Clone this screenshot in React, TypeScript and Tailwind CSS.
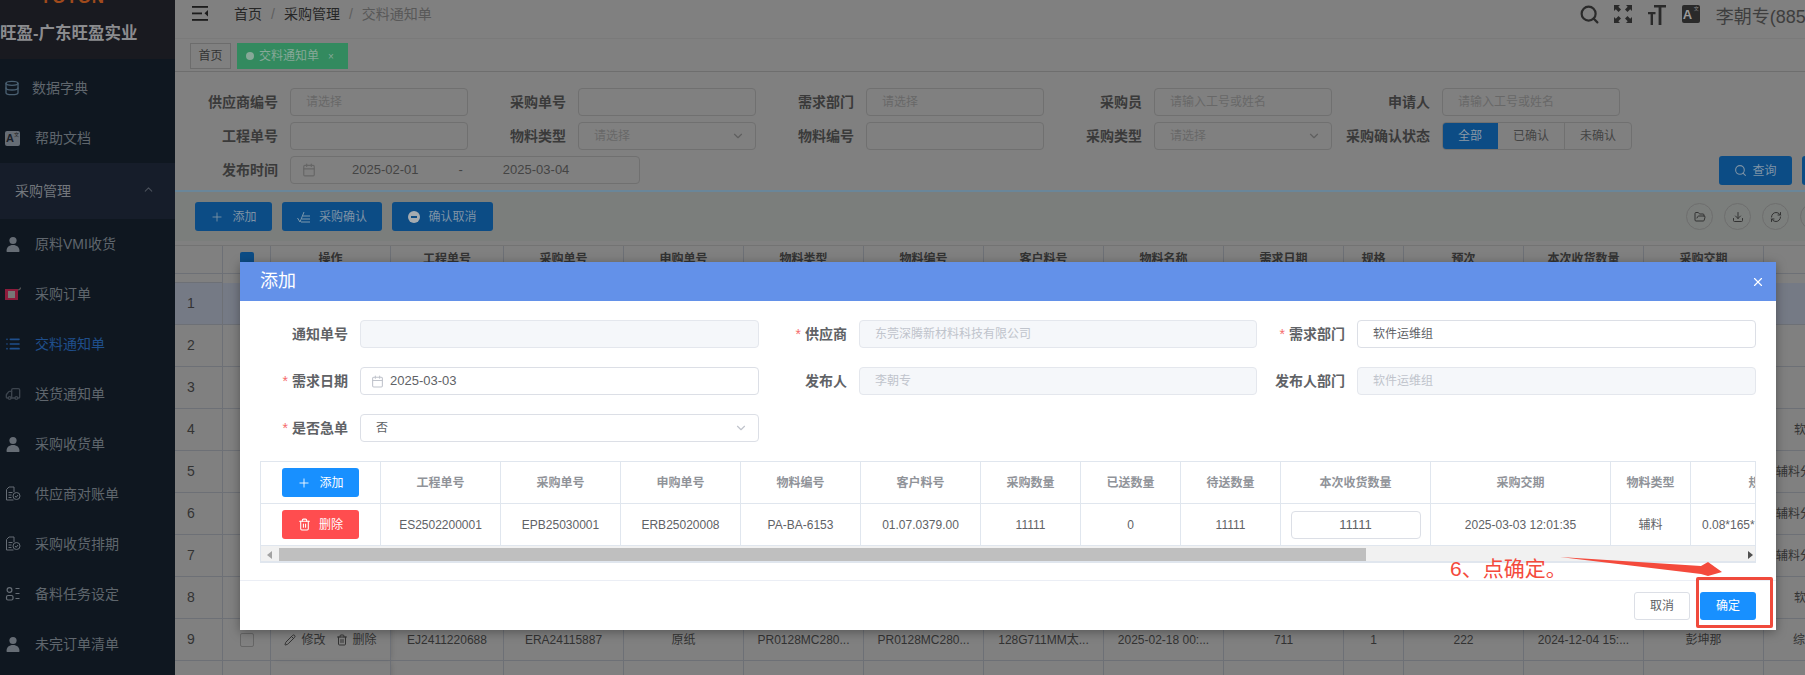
import React from 'react';
import {
  Calendar,
  ChevronDown,
  ChevronUp,
  Database,
  Download,
  FolderOpen,
  List,
  Pencil,
  Plus,
  RefreshCw,
  Search,
  Trash2,
  Truck,
  X,
} from 'lucide-react';

const FONT = "font-['Liberation_Sans','Noto_Sans_CJK_SC',sans-serif]";

// ---- small drawn icons ----
function PersonIcon() {
  return (
    <svg width="16" height="16" viewBox="0 0 16 16" className="shrink-0 text-[#666d75]" fill="currentColor">
      <circle cx="8" cy="4.5" r="3.6" />
      <path d="M1.5 15c0-3.8 2.6-6 6.5-6s6.500 2.200 6.500 6c0 .6-.4 1-1 1h-11c-.6 0-1-.4-1-1z" />
    </svg>
  );
}

function DocIcon() {
  return (
    <svg width="16" height="16" viewBox="0 0 16 16" fill="none" stroke="#666d75" strokeWidth="1" className="shrink-0">
      <path d="M8.500 14H1.500V3.500L4 1h5v5" />
      <path d="M3.500 6.500h4M3.500 9h3M3.500 11.500h3" />
      <circle cx="11.500" cy="10" r="3.500" />
      <path d="M10 10l1.200 1.300L13 9" />
    </svg>
  );
}

function TaskIcon() {
  return (
    <svg width="16" height="16" viewBox="0 0 16 16" fill="none" stroke="#666d75" strokeWidth="1.200" className="shrink-0">
      <circle cx="4.500" cy="4" r="2.400" />
      <rect x="1.500" y="9.500" width="6.500" height="4.500" rx="1.500" />
      <path d="M10.500 2.500h4M10.500 7.500h4M10.500 12.500h4" />
    </svg>
  );
}

function TagIcon() {
  return (
    <svg width="16" height="14" viewBox="0 0 16 14" className="shrink-0">
      <rect x="0" y="2" width="13" height="11" fill="#8c1c3c" />
      <rect x="3" y="4" width="7" height="7" fill="#777" />
      <path d="M13 3c1.500-.2 2.500-1 2.500-2.500" fill="none" stroke="#555" strokeWidth="1.200" />
    </svg>
  );
}

function TranslateIcon({ box, text }: { box: string; text: string }) {
  return (
    <div className={`relative flex shrink-0 items-center rounded-[2px] ${box}`}>
      <span className={`pl-[1px] font-bold leading-none ${text}`}>A</span>
      <span className="absolute right-[1px] top-[1px] text-[5px] leading-none">文</span>
    </div>
  );
}

function Hamburger() {
  return (
    <svg width="16" height="15" viewBox="0 0 16 15" fill="#1c1c1c" className="shrink-0">
      <rect x="0" y="0" width="16" height="1.800" />
      <rect x="0" y="6.500" width="10" height="1.800" />
      <rect x="0" y="13" width="16" height="1.800" />
      <path d="M16 4v6.500L12.500 7.300z" />
    </svg>
  );
}

function FullscreenIcon() {
  return (
    <svg width="18" height="18" viewBox="0 0 18 18" fill="#2a2a2a" className="shrink-0">
      <path d="M0 0h6L4.300 1.800 7 4.500 4.500 7 1.800 4.300 0 6z" />
      <path d="M18 0v6l-1.800-1.700L13.500 7 11 4.500l2.700-2.700L12 0z" />
      <path d="M0 18v-6l1.800 1.700L4.500 11 7 13.500l-2.700 2.700L6 18z" />
      <path d="M18 18h-6l1.700-1.800L11 13.500l2.500-2.500 2.700 2.700L18 12z" />
    </svg>
  );
}

function TextSizeIcon() {
  return (
    <svg width="18" height="20" viewBox="0 0 18 20" fill="#2a2a2a" className="shrink-0">
      <path d="M6 0h12v2.600h-4.600V20h-2.800V2.600H6z" />
      <path d="M0 7h7.500v2.200H5V20H2.600V9.200H0z" />
    </svg>
  );
}

function CheckLinesIcon() {
  return (
    <svg width="14" height="12" viewBox="0 0 14 12" fill="none" stroke="#7c98ad" strokeWidth="1">
      <path d="M0.500 7l2.500 4L7 1" />
      <path d="M6 5h7M5 8h8M4 11h9" />
    </svg>
  );
}

function MinusDot() {
  return (
    <svg width="12" height="12" viewBox="0 0 12 12">
      <circle cx="6" cy="6" r="6" fill="#a5abb0" />
      <rect x="3" y="5" width="6" height="2" fill="#0c4c85" />
    </svg>
  );
}

// ---- sidebar ----
function NavItem({ icon, label, active }: { icon: React.ReactNode; label: string; active?: boolean }) {
  return (
    <div className="flex h-[50px] items-center pl-[5px]">
      <div className="flex w-[30px] shrink-0 items-center">{icon}</div>
      <span className={active ? 'text-[14px] text-[#1f4f8c]' : 'text-[14px] text-[#5f666d]'}>{label}</span>
    </div>
  );
}

function Sidebar() {
  return (
    <aside className="w-[175px] shrink-0 overflow-hidden bg-[#0f1720]">
      <div className="h-[59px] overflow-hidden bg-[#191a20]">
        <div className="-mt-[11px] pl-[40px] text-[17px] font-bold leading-[18px] tracking-[1px] text-[#a04a1c]">YOTON</div>
        <div className="mt-[14px] whitespace-nowrap text-[16.500px] font-bold leading-[24px] text-[#8b8c8f]">旺盈-广东旺盈实业</div>
      </div>
      <div className="mt-[4px]">
        <div className="flex h-[50px] items-center pl-[4px]">
          <Database size={16} className="mr-[12px] shrink-0 text-[#4a6072]" />
          <span className="text-[14px] text-[#5f666d]">数据字典</span>
        </div>
        <NavItem
          icon={<TranslateIcon box="h-[15px] w-[15px] bg-[#666d75] text-[#222]" text="text-[11px] text-[#1a2028]" />}
          label="帮助文档"
        />
      </div>
      <div className="flex h-[56px] items-center justify-between bg-[#161d2a] pl-[15px] pr-[20px]">
        <span className="text-[14px] text-[#73777d]">采购管理</span>
        <ChevronUp size={13} className="-mt-[4px] text-[#4a505a]" />
      </div>
      <NavItem icon={<PersonIcon />} label="原料VMI收货" />
      <NavItem icon={<TagIcon />} label="采购订单" />
      <NavItem icon={<List size={16} className="text-[#1f4f8c]" strokeWidth={2.500} />} label="交料通知单" active />
      <NavItem icon={<Truck size={16} className="-scale-x-100 text-[#3c444d]" />} label="送货通知单" />
      <NavItem icon={<PersonIcon />} label="采购收货单" />
      <NavItem icon={<DocIcon />} label="供应商对账单" />
      <NavItem icon={<DocIcon />} label="采购收货排期" />
      <NavItem icon={<TaskIcon />} label="备料任务设定" />
      <NavItem icon={<PersonIcon />} label="未完订单清单" />
    </aside>
  );
}

// ---- filter form ----
function FilterField({
  label,
  placeholder,
  select,
  labelClass = 'w-[98px]',
}: {
  label: string;
  placeholder?: string;
  select?: boolean;
  labelClass?: string;
}) {
  return (
    <div className="flex items-center">
      <span className={`shrink-0 whitespace-nowrap text-right text-[14px] font-bold text-[#3a3a3a] ${labelClass}`}>{label}</span>
      <div className="ml-[12px] flex h-[28px] w-[178px] items-center justify-between rounded-[4px] border border-[#707070] px-[15px] text-[12px] text-[#686868]">
        <span>{placeholder}</span>
        {select && <ChevronDown size={14} className="-mr-[5px] text-[#5f5f5f]" />}
      </div>
    </div>
  );
}

function Filters() {
  return (
    <section className="flex h-[120px] shrink-0 flex-col gap-[6px] border-b-2 border-[#6a8699] pl-[4px] pt-[16px]">
      <div className="flex">
        <FilterField label="供应商编号" placeholder="请选择" labelClass="w-[99px]" />
        <FilterField label="采购单号" />
        <FilterField label="需求部门" placeholder="请选择" />
        <FilterField label="采购员" placeholder="请输入工号或姓名" />
        <FilterField label="申请人" placeholder="请输入工号或姓名" />
      </div>
      <div className="flex">
        <FilterField label="工程单号" labelClass="w-[99px]" />
        <FilterField label="物料类型" placeholder="请选择" select />
        <FilterField label="物料编号" />
        <FilterField label="采购类型" placeholder="请选择" select />
        <div className="flex items-center">
          <span className="w-[98px] shrink-0 whitespace-nowrap text-right text-[14px] font-bold text-[#3a3a3a]">采购确认状态</span>
          <div className="ml-[12px] flex h-[28px] overflow-hidden rounded-[4px] border border-[#707070] text-[12px] text-[#444]">
            <div className="-my-px -ml-px flex w-[56px] items-center justify-center bg-[#0c4c85] text-[#8d9aa5]">全部</div>
            <div className="flex w-[67px] items-center justify-center border-r border-[#707070]">已确认</div>
            <div className="flex w-[66px] items-center justify-center">未确认</div>
          </div>
        </div>
      </div>
      <div className="flex">
        <span className="w-[99px] shrink-0 text-right text-[14px] font-bold leading-[28px] text-[#3a3a3a]">发布时间</span>
        <div className="ml-[12px] flex h-[28px] w-[350px] shrink-0 items-center rounded-[4px] border border-[#707070] text-[13px] text-[#444]">
          <Calendar size={14} className="ml-[11px] text-[#666]" />
          <span className="ml-[36px]">2025-02-01</span>
          <span className="ml-[40px]">-</span>
          <span className="ml-[40px]">2025-03-04</span>
        </div>
        <div className="ml-[1079px] flex shrink-0 gap-[10px]">
          <div className="flex h-[29px] w-[73px] items-center justify-center gap-[5px] rounded-[3px] bg-[#0c4c85] text-[12px] text-[#7f93a5]">
            <Search size={13} />
            查询
          </div>
          <div className="flex h-[29px] w-[73px] items-center justify-center rounded-[3px] bg-[#0c4c85]" />
        </div>
      </div>
    </section>
  );
}

// ---- background table ----
const GRID =
  'grid grid-cols-[48px_48px_120px_113px_120px_120px_120px_120px_120px_120px_120px_60px_120px_120px_120px_120px]';

const HEADERS = ['操作', '工程单号', '采购单号', '申购单号', '物料类型', '物料编号', '客户料号', '物料名称', '需求日期', '规格', '预次', '本次收货数量', '采购交期', '发布人', ''];

const ROW9 = ['EJ2411220688', 'ERA24115887', '原纸', 'PR0128MC280...', 'PR0128MC280...', '128G711MM太...', '2025-02-18 00:...', '711', '1', '222', '2024-12-04 15:...', '彭坤那'];

const LAST_COL: { [row: number]: { text: string; cls: string } } = {
  4: { text: '软', cls: 'pl-[30px]' },
  5: { text: '辅料分', cls: 'pl-[12px]' },
  6: { text: '辅料分', cls: 'pl-[12px]' },
  7: { text: '辅料分', cls: 'pl-[12px]' },
  8: { text: '软', cls: 'pl-[30px]' },
  9: { text: '综', cls: 'pl-[29px]' },
};

const cell = 'flex items-center justify-center border-r border-b border-[#6d7076] text-[12px] text-[#333] whitespace-nowrap overflow-hidden';

function Checkbox({ on }: { on?: boolean }) {
  return (
    <div className={on ? 'h-[14px] w-[14px] rounded-[2px] bg-[#0c4c85]' : 'h-[14px] w-[14px] rounded-[2px] border border-[#666] bg-[#808080]'} />
  );
}

function BackTable() {
  const rows = [1, 2, 3, 4, 5, 6, 7, 8, 9, 10];
  return (
    <div className="mt-[4px] border-t border-[#737373]">
      <div className={`${GRID} h-[37px] w-[1705px]`}>
        <div className={cell} />
        <div className={cell}>
          <Checkbox on />
        </div>
        {HEADERS.map((h, i) => (
          <div key={i} className={`${cell} font-bold`}>
            {h}
          </div>
        ))}
      </div>
      {rows.map((n) => (
        <div key={n} className={`${GRID} h-[42px] w-[1705px] ${n === 1 ? 'bg-[#757a85]' : ''}`}>
          <div className={`${cell} justify-start pl-[12px] text-[14px]`}>{n}</div>
          <div className={cell}>
            <Checkbox />
          </div>
          <div className={`${cell} gap-[6px] text-[#1c3f74] shadow-[3px_0_5px_-2px_rgba(0,0,0,0.12)]`}>
            {n === 9 && (
              <>
                <span className="flex items-center gap-[5px]">
                  <Pencil size={12} />
                  修改
                </span>
                <span className="ml-[4px] flex items-center gap-[5px]">
                  <Trash2 size={12} />
                  删除
                </span>
              </>
            )}
          </div>
          {Array.from({ length: 12 }).map((_, i) => (
            <div key={i} className={cell}>
              {n === 9 ? ROW9[i] : ''}
            </div>
          ))}
          <div className={`${cell} justify-start ${LAST_COL[n]?.cls ?? ''}`}>{LAST_COL[n]?.text}</div>
        </div>
      ))}
    </div>
  );
}

// ---- dialog ----
function DialogField({
  label,
  required,
  labelClass,
  inputClass,
  value,
  disabled,
  children,
}: {
  label: string;
  required?: boolean;
  labelClass: string;
  inputClass: string;
  value?: string;
  disabled?: boolean;
  children?: React.ReactNode;
}) {
  return (
    <div className="flex items-center">
      <span className={`shrink-0 text-right text-[14px] font-bold text-[#606266] ${labelClass}`}>
        {required && <span className="mr-[4px] font-normal text-[#f56c6c]">*</span>}
        {label}
      </span>
      <div
        className={`ml-[12px] flex h-[28px] shrink-0 items-center rounded-[4px] border px-[15px] text-[12px] ${inputClass} ${
          disabled ? 'border-[#e4e7ed] bg-[#f5f7fa] text-[#c0c4cc]' : 'border-[#dcdfe6] bg-white text-[#606266]'
        }`}
      >
        {children ?? value}
      </div>
    </div>
  );
}

const SUB_GRID = 'grid grid-cols-[120px_120px_120px_120px_120px_120px_100px_100px_100px_150px_180px_80px_140px]';
const SUB_HEAD = ['工程单号', '采购单号', '申购单号', '物料编号', '客户料号', '采购数量', '已送数量', '待送数量', '本次收货数量', '采购交期', '物料类型', '规格'];
const subCell = 'flex items-center justify-center border-r border-b border-[#e0e6ee] text-[12px] whitespace-nowrap overflow-hidden';

function SubTable() {
  return (
    <div className="mx-[20px] mt-[19px] h-[102px] w-[1496px] overflow-hidden border border-[#e0e6ee] border-b-2">
      <div className={`${SUB_GRID} h-[42px] w-[1570px]`}>
        <div className={subCell}>
          <button className="flex h-[29px] w-[77px] items-center justify-center gap-[8px] rounded-[3px] bg-[#1890ff] text-[12px] text-white">
            <Plus size={14} strokeWidth={1.500} />
            添加
          </button>
        </div>
        {SUB_HEAD.map((h) => (
          <div key={h} className={`${subCell} font-bold text-[#909399]`}>
            {h}
          </div>
        ))}
      </div>
      <div className={`${SUB_GRID} h-[42px] w-[1570px] text-[#606266]`}>
        <div className={subCell}>
          <button className="flex h-[29px] w-[77px] items-center justify-center gap-[8px] rounded-[3px] bg-[#ff4d4f] text-[12px] text-white">
            <Trash2 size={13} />
            删除
          </button>
        </div>
        <div className={subCell}>ES2502200001</div>
        <div className={subCell}>EPB25030001</div>
        <div className={subCell}>ERB25020008</div>
        <div className={subCell}>PA-BA-6153</div>
        <div className={subCell}>01.07.0379.00</div>
        <div className={subCell}>11111</div>
        <div className={subCell}>0</div>
        <div className={subCell}>11111</div>
        <div className={subCell}>
          <div className="flex h-[28px] w-[130px] items-center justify-center rounded-[4px] border border-[#dcdfe6] text-[13px]">11111</div>
        </div>
        <div className={subCell}>2025-03-03 12:01:35</div>
        <div className={subCell}>辅料</div>
        <div className={`${subCell} justify-start pl-[11px]`}>0.08*165*1000</div>
      </div>
      <div className="flex h-[17px] items-center bg-[#f1f1f1]">
        <div className="ml-[6px] h-0 w-0 border-y-[4px] border-r-[5px] border-y-transparent border-r-[#a3a3a3]" />
        <div className="ml-[7px] h-[13px] w-[1087px] bg-[#bfbfbf]" />
        <div className="ml-[382px] h-0 w-0 border-y-[4px] border-l-[5px] border-y-transparent border-l-[#505050]" />
      </div>
    </div>
  );
}

function Dialog() {
  return (
    <div className="absolute left-[240px] top-[262px] h-[368px] w-[1536px] bg-white shadow-[0_2px_10px_rgba(0,0,0,0.35)]">
      <div className="flex h-[39px] items-center justify-between bg-[#6391e9] pl-[20px] pr-[11px] text-white">
        <span className="text-[18px]">添加</span>
        <X size={14} />
      </div>
      <div className="h-[280px] border-b border-[#ebeef5]">
        <div className="flex flex-col gap-[19px] pt-[19px]">
          <div className="flex">
            <DialogField label="通知单号" labelClass="w-[108px]" inputClass="w-[399px]" disabled />
            <DialogField label="供应商" required labelClass="w-[88px]" inputClass="w-[398px]" value="东莞深腾新材料科技有限公司" disabled />
            <DialogField label="需求部门" required labelClass="w-[88px]" inputClass="w-[399px]" value="软件运维组" />
          </div>
          <div className="flex">
            <DialogField label="需求日期" required labelClass="w-[108px]" inputClass="w-[399px]">
              <Calendar size={13} className="-ml-[5px] mr-[6px] text-[#c0c4cc]" />
              <span className="text-[13px]">2025-03-03</span>
            </DialogField>
            <DialogField label="发布人" labelClass="w-[88px]" inputClass="w-[398px]" value="李朝专" disabled />
            <DialogField label="发布人部门" labelClass="w-[88px]" inputClass="w-[399px]" value="软件运维组" disabled />
          </div>
          <div className="flex">
            <DialogField label="是否急单" required labelClass="w-[108px]" inputClass="w-[399px] justify-between">
              <span>否</span>
              <ChevronDown size={14} className="-mr-[5px] text-[#c0c4cc]" />
            </DialogField>
          </div>
        </div>
        <SubTable />
      </div>
      <div className="flex justify-end gap-[10px] pr-[20px] pt-[11px] text-[12px]">
        <button className="h-[28px] w-[56px] rounded-[3px] border border-[#dcdfe6] bg-white text-[#606266]">取消</button>
        <button className="h-[28px] w-[56px] rounded-[3px] bg-[#1890ff] text-white">确定</button>
      </div>
    </div>
  );
}

export default function App() {
  return (
    <div className={`relative flex h-[675px] w-[1805px] overflow-hidden bg-[#808080] ${FONT}`}>
      <Sidebar />
      <main className="flex min-w-0 flex-1 flex-col overflow-hidden">
        {/* top bar */}
        <div className="flex h-[39px] shrink-0 items-start border-b border-[#7a7a7a] pl-[17px] pt-[6px]">
          <Hamburger />
          <div className="ml-[26px] -mt-[1px] flex shrink-0 gap-[9px] whitespace-nowrap text-[14px] leading-[18px]">
            <span className="text-[#262626]">首页</span>
            <span className="text-[#5e5e5e]">/</span>
            <span className="text-[#262626]">采购管理</span>
            <span className="text-[#5e5e5e]">/</span>
            <span className="text-[#585858]">交料通知单</span>
          </div>
          <div className="ml-[1147px] -mt-[1px] flex shrink-0 items-start gap-[16px]">
            <Search size={21} strokeWidth={2.500} className="-mr-[2px] -mt-[1px] shrink-0 text-[#2a2a2a]" />
            <FullscreenIcon />
            <TextSizeIcon />
            <TranslateIcon box="h-[18px] w-[18px] bg-[#2a2a2a] text-[#888]" text="text-[13px] text-[#9a9a9a]" />
            <span className="-mt-[1px] whitespace-nowrap text-[18px] leading-[26px] text-[#3e3e3e]">李朝专(885</span>
          </div>
        </div>
        {/* tabs */}
        <div className="flex h-[33px] shrink-0 gap-[6px] border-b border-[#6e6e6e] pl-[15px] pt-[4px]">
          <div className="flex h-[26px] w-[41px] items-center justify-center border border-[#6c6c6c] text-[12px] text-[#333]">首页</div>
          <div className="flex h-[26px] w-[111px] items-center bg-[#338a5f] pl-[9px] text-[12px] text-[#87a898]">
            <span className="mr-[5px] h-[8px] w-[8px] rounded-full bg-[#87a898]" />
            交料通知单
            <span className="ml-[9px] text-[10px]">×</span>
          </div>
        </div>
        <Filters />
        {/* toolbar */}
        <div className="flex h-[49px] shrink-0 bg-[#7b7e7c] pl-[20px] pt-[10px] text-[12px] text-[#7f93a5]">
          <div className="flex shrink-0 gap-[10px]">
            <div className="flex h-[29px] w-[77px] items-center justify-center gap-[8px] rounded-[3px] bg-[#0c4c85]">
              <Plus size={14} strokeWidth={1.500} />
              添加
            </div>
            <div className="flex h-[29px] w-[100px] items-center justify-center gap-[8px] rounded-[3px] bg-[#0c4c85]">
              <CheckLinesIcon />
              采购确认
            </div>
            <div className="flex h-[29px] w-[101px] items-center justify-center gap-[8px] rounded-[3px] bg-[#0c4c85]">
              <MinusDot />
              确认取消
            </div>
          </div>
          <div className="ml-[1193px] mt-[1px] flex shrink-0 gap-[11px] text-[#333]">
            {[FolderOpen, Download, RefreshCw, Search].map((Icon, i) => (
              <div key={i} className="flex h-[27px] w-[27px] items-center justify-center rounded-full border border-[#6e6e6e]">
                <Icon size={12} />
              </div>
            ))}
          </div>
        </div>
        <BackTable />
      </main>

      <Dialog />

      {/* screenshot annotation */}
      <div className="absolute left-[1450px] top-[555px] text-[21px] leading-[28px] text-[#f44a3c]">6、点确定。</div>
      <svg className="absolute left-[1555px] top-[552px]" width="175" height="30" viewBox="0 0 175 30">
        <polygon points="5,5 146,14 153,10 167,20 153,24 146,22" fill="#f44a3c" />
      </svg>
      <div className="absolute left-[1696px] top-[577px] h-[51px] w-[77px] rounded-[2px] border-[3px] border-[#f04a3c]" />
    </div>
  );
}
